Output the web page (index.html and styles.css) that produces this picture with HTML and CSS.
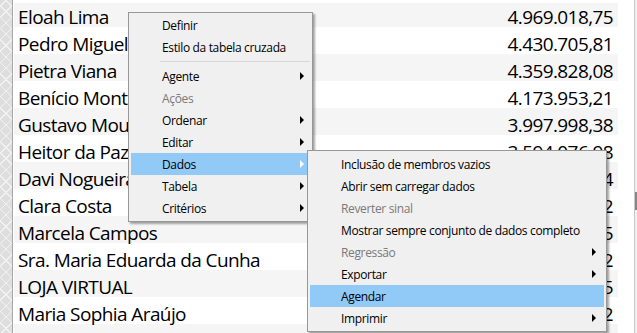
FILE: index.html
```html
<!DOCTYPE html>
<html lang="pt">
<head>
<meta charset="utf-8">
<title>Tabela cruzada</title>
<link rel="stylesheet" href="styles.css">
</head>
<body>
<div class="frame">
  <div class="hatch"></div>
  <div class="grid">
    <div class="row first odd"><span class="name">Eloah Lima</span><span class="val">4.969.018,75</span></div>
    <div class="row"><span class="name">Pedro Miguel Castro</span><span class="val">4.430.705,81</span></div>
    <div class="row odd"><span class="name">Pietra Viana</span><span class="val">4.359.828,08</span></div>
    <div class="row"><span class="name">Benício Monteiro</span><span class="val">4.173.953,21</span></div>
    <div class="row odd"><span class="name">Gustavo Moura</span><span class="val">3.997.998,38</span></div>
    <div class="row"><span class="name">Heitor da Paz</span><span class="val">3.594.076,98</span></div>
    <div class="row odd"><span class="name">Davi Nogueira</span><span class="val">3.482.115,14</span></div>
    <div class="row"><span class="name">Clara Costa</span><span class="val">3.301.447,52</span></div>
    <div class="row odd"><span class="name">Marcela Campos</span><span class="val">3.215.880,35</span></div>
    <div class="row"><span class="name">Sra. Maria Eduarda da Cunha</span><span class="val">3.102.694,02</span></div>
    <div class="row odd"><span class="name">LOJA VIRTUAL</span><span class="val">2.987.310,45</span></div>
    <div class="row"><span class="name">Maria Sophia Araújo</span><span class="val">2.864.529,72</span></div>
    <div class="row odd"><span class="name"></span><span class="val"></span></div>
  </div>
  <div class="gutter"></div>
  <div class="scroll"><div class="thumb"></div></div>
</div>

<div class="menu main-menu">
  <div class="item">Definir</div>
  <div class="item">Estilo da tabela cruzada</div>
  <div class="sep"></div>
  <div class="item sub">Agente</div>
  <div class="item disabled">Ações</div>
  <div class="item sub">Ordenar</div>
  <div class="item sub">Editar</div>
  <div class="item sub active">Dados</div>
  <div class="item sub">Tabela</div>
  <div class="item sub">Critérios</div>
</div>

<div class="menu sub-menu">
  <div class="item">Inclusão de membros vazios</div>
  <div class="item">Abrir sem carregar dados</div>
  <div class="item disabled">Reverter sinal</div>
  <div class="item">Mostrar sempre conjunto de dados completo</div>
  <div class="item sub disabled">Regressão</div>
  <div class="item sub">Exportar</div>
  <div class="item active">Agendar</div>
  <div class="item sub">Imprimir</div>
</div>
</body>
</html>
```

FILE: styles.css
```css
html, body {
  margin: 0;
  padding: 0;
  width: 637px;
  height: 333px;
  overflow: hidden;
  background: #ffffff;
}

.frame {
  display: flex;
  height: 333px;
  overflow: hidden;
  font-family: "Open Sans", "Noto Sans", sans-serif;
  color: #000;
}

.hatch {
  width: 12px;
  flex: none;
  border-right: 1px solid #a8a8a8;
  margin-right: 1px;
  background-color: #dedede;
  background-image:
    repeating-linear-gradient(45deg, transparent 0 7px, #f2f2f2 7px 8px),
    repeating-linear-gradient(-45deg, transparent 0 7px, #f2f2f2 7px 8px);
}

.grid {
  width: 604px;
  flex: none;
  padding-top: 3px;
}

.row {
  height: 27px;
  box-sizing: border-box;
  display: flex;
  justify-content: space-between;
  align-items: flex-end;
  padding: 0 5px 0 4px;
  font-size: 19px;
  letter-spacing: -0.6px;
  line-height: 20px;
  white-space: nowrap;
  background: #ffffff;
}

.row.odd {
  background: #f5f5f5;
}

.row.first {
  height: 24px;
}

.gutter {
  width: 16px;
  flex: none;
}

.scroll {
  width: 2px;
  flex: none;
  border-left: 1px solid #c8c8c8;
  background: #f0f0f0;
  padding-top: 192px;
}

.thumb {
  height: 18px;
  background: #858585;
}

.menu {
  position: absolute;
  box-sizing: border-box;
  background: #f0f0f0;
  border: 1px solid #979797;
  box-shadow: 2px 2px 2px rgba(0, 0, 0, 0.35);
  padding: 2px;
  font-family: "Open Sans", "Noto Sans", sans-serif;
  font-size: 12px;
  letter-spacing: -0.35px;
  color: #000;
}

.main-menu {
  left: 128px;
  top: 12px;
  width: 185px;
  padding-top: 1px;
}

.sub-menu {
  left: 307px;
  top: 150px;
  width: 300px;
}

.item {
  position: relative;
  height: 22px;
  line-height: 23px;
  padding-left: 31px;
  white-space: nowrap;
}

.item.disabled {
  color: #7a7a7a;
}

.item.active {
  background: #91c9f7;
}

.item.sub::after {
  content: "";
  position: absolute;
  right: 6px;
  top: 7px;
  border-left: 4px solid #000;
  border-top: 4px solid transparent;
  border-bottom: 4px solid transparent;
}

.sub-menu .item.sub::after {
  right: 8px;
}

.item.sub.active::after {
  border-left-color: #ffffff;
}

.sep {
  height: 7px;
  display: flex;
  align-items: center;
  padding-left: 29px;
}

.sep::before {
  content: "";
  flex: 1;
  height: 1px;
  background: #d7d7d7;
}
```
